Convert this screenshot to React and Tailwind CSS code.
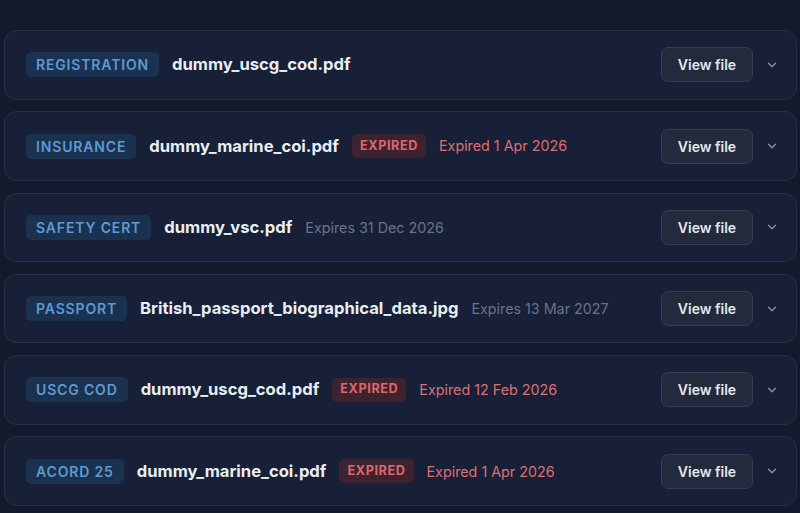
import React from 'react';
import { ChevronDown } from 'lucide-react';

const docs = [
    { type: 'REGISTRATION', file: 'dummy_uscg_cod.pdf' },
    { type: 'INSURANCE', file: 'dummy_marine_coi.pdf', expired: true, date: 'Expired 1 Apr 2026' },
    { type: 'SAFETY CERT', file: 'dummy_vsc.pdf', date: 'Expires 31 Dec 2026' },
    { type: 'PASSPORT', file: 'British_passport_biographical_data.jpg', date: 'Expires 13 Mar 2027' },
    { type: 'USCG COD', file: 'dummy_uscg_cod.pdf', expired: true, date: 'Expired 12 Feb 2026' },
    { type: 'ACORD 25', file: 'dummy_marine_coi.pdf', expired: true, date: 'Expired 1 Apr 2026' },
];

const DocRow = ({ doc }) => (
    <div className="h-[69.5px] rounded-[12px] border border-[#263045] bg-[#172036] flex items-center pl-[21px] pr-[17px]">
        <div className="flex items-center gap-[13px] flex-1 min-w-0">
            <span className="h-[25px] px-[10px] flex items-center rounded-[5px] bg-[#1b3150] text-[#5d9ad3] text-[14px] font-semibold tracking-[0.06em]">
                {doc.type}
            </span>
            <span className="text-[16.6px] font-bold text-[#e9edf4] whitespace-nowrap">{doc.file}</span>
            {doc.expired && (
                <span className="h-[24px] px-[8px] flex items-center rounded-[5px] bg-[#3d2330] text-[#df676b] text-[12.6px] font-bold tracking-[0.05em]">
                    EXPIRED
                </span>
            )}
            {doc.date && (
                <span className={doc.expired ? 'text-[14.3px] text-[#dd6f72]' : 'text-[14.3px] text-[#697386]'}>
                    {doc.date}
                </span>
            )}
        </div>
        <button className="h-[35px] w-[92px] rounded-[7px] border border-[#343e51] bg-[#222a3b] text-[14px] font-semibold text-[#e5e8ee]">
            View file
        </button>
        <ChevronDown className="ml-[12px] w-[14px] h-[14px] text-[#8a93a5]" strokeWidth={2.25} />
    </div>
);

const App = () => {
    return (
        <div className="w-[800px] h-[513px] overflow-hidden bg-[#131a2c] pt-[30px] pl-[4px] pr-[3px] flex flex-col gap-[11.8px]" style={{ fontFamily: 'Inter, "Noto Sans", sans-serif' }}>
            {docs.map((doc, i) => (
                <DocRow key={i} doc={doc} />
            ))}
        </div>
    );
};

export default App;
